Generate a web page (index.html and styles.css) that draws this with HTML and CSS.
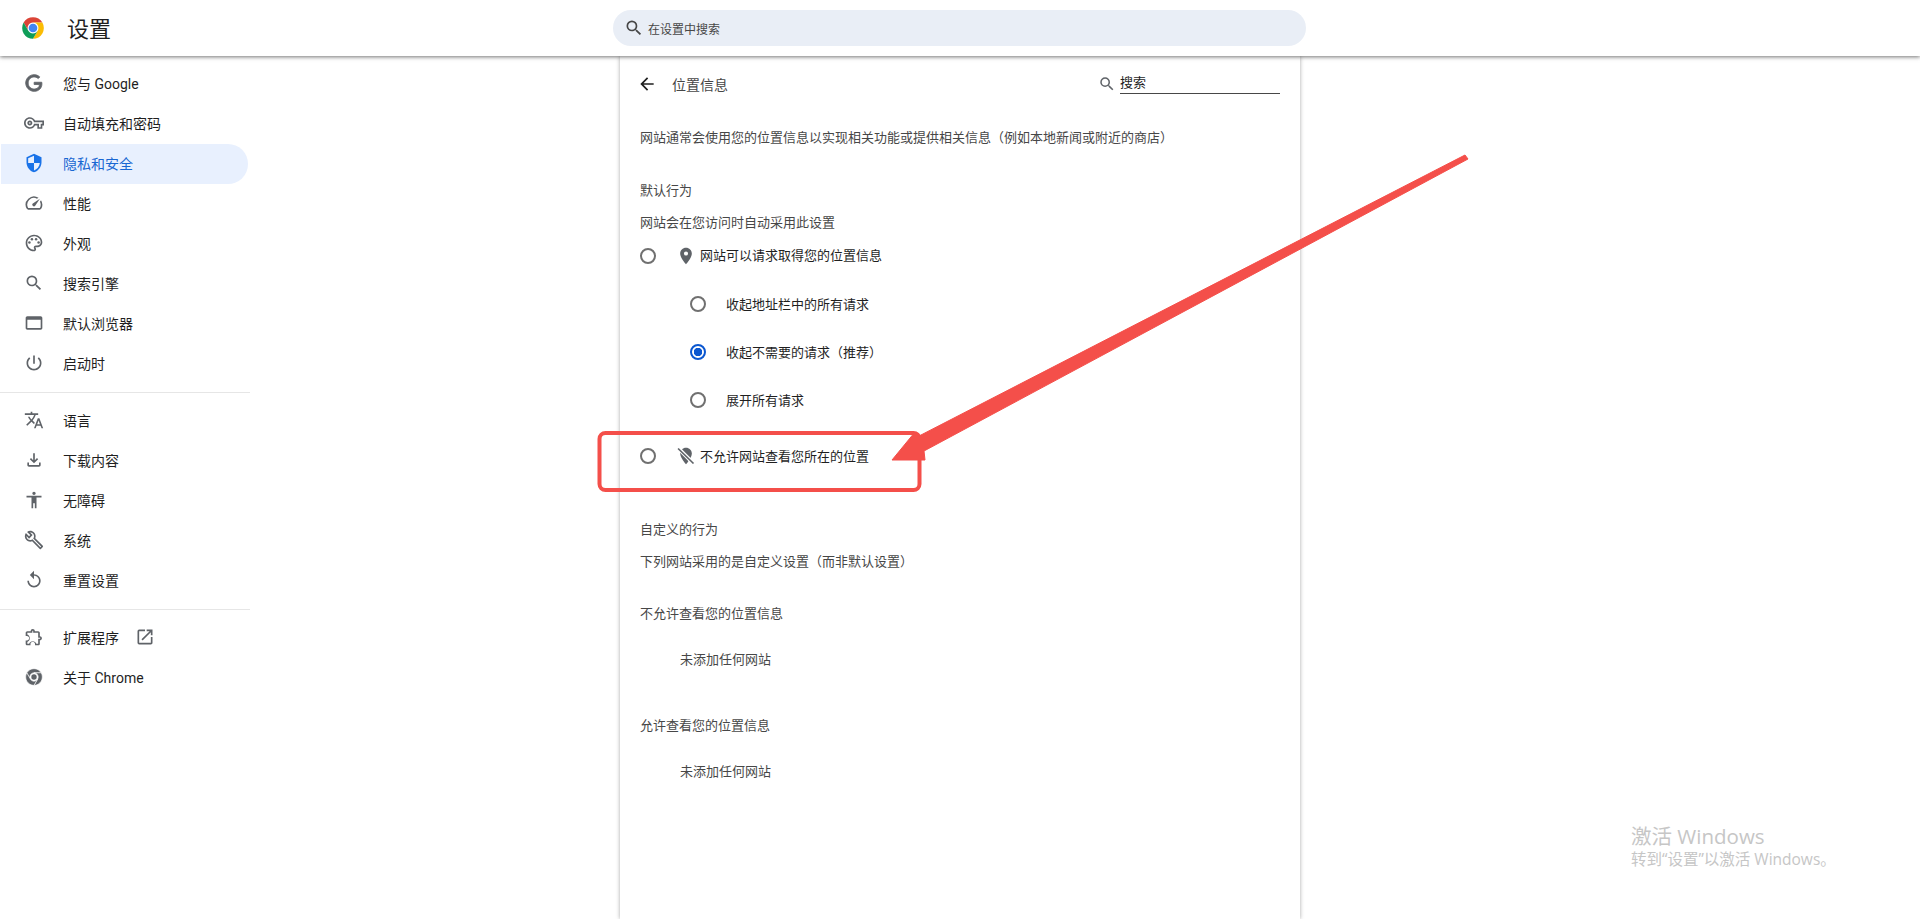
FILE: index.html
```html
<!DOCTYPE html>
<html lang="zh-CN">
<head>
  <meta charset="UTF-8">
  <title>设置 - 位置信息</title>
  <link rel="stylesheet" href="styles.css">
</head>
<body>
  <div class="topbar">
    <div class="brand">
      <svg class="chrome-logo" viewBox="0 0 48 48">
        <circle cx="24" cy="24" r="11" fill="#fff"/>
        <path fill="#db4437" d="M6.68 14A20 20 0 0 1 41.32 14H24A10 10 0 0 0 15.34 29Z"/>
        <path fill="#fbbc04" d="M41.32 14A20 20 0 0 1 24 44L32.66 29A10 10 0 0 0 24 14Z"/>
        <path fill="#0f9d58" d="M24 44A20 20 0 0 1 6.68 14L15.34 29A10 10 0 0 0 32.66 29Z"/>
        <circle cx="24" cy="24" r="8" fill="#4285f4"/>
      </svg>
      <span class="brand-title">设置</span>
    </div>
    <div class="top-search">
      <svg class="ico-search" viewBox="0 0 24 24"><path d="M15.5 14h-.79l-.28-.27A6.471 6.471 0 0 0 16 9.5 6.5 6.5 0 1 0 9.5 16c1.61 0 3.09-.59 4.23-1.57l.27.28v.79l5 4.99L20.49 19l-4.99-5zm-6 0C7.01 14 5 11.99 5 9.5S7.01 5 9.5 5 14 7.01 14 9.5 11.99 14 9.5 14z"/></svg>
      <span>在设置中搜索</span>
    </div>
  </div>

  <div class="main">
    <nav class="sidebar">
      <a class="nav-item">
        <svg class="ico-g" viewBox="0 0 24 24"><path d="M21.35 11.1h-9.17v2.73h6.51c-.33 3.81-3.5 5.44-6.5 5.44C8.36 19.27 5 16.25 5 12c0-4.1 3.2-7.27 7.2-7.27 3.09 0 4.9 1.97 4.9 1.97L19 4.72S16.56 2 12.1 2C6.42 2 2.03 6.8 2.03 12c0 5.05 4.13 10 10.22 10 5.35 0 9.25-3.67 9.25-9.09 0-1.15-.15-1.81-.15-1.81z"/></svg>
        您与 Google
      </a>
      <a class="nav-item">
        <svg viewBox="0 0 24 24"><path d="M22 19h-6v-4h-2.68c-1.14 2.42-3.6 4-6.32 4-3.86 0-7-3.14-7-7s3.14-7 7-7c2.72 0 5.17 1.58 6.32 4H24v6h-2v4zm-4-2h2v-4h2v-2H11.94l-.23-.67C11.01 8.34 9.11 7 7 7c-2.76 0-5 2.24-5 5s2.24 5 5 5c2.11 0 4.01-1.34 4.71-3.33l.23-.67H18v4zM7 15c-1.65 0-3-1.35-3-3s1.35-3 3-3 3 1.35 3 3-1.35 3-3 3zm0-4c-.55 0-1 .45-1 1s.45 1 1 1 1-.45 1-1-.45-1-1-1z"/></svg>
        自动填充和密码
      </a>
      <a class="nav-item active">
        <svg viewBox="0 0 24 24"><path fill-rule="evenodd" d="M12 1L3 5v6c0 5.55 3.84 10.74 9 12 5.16-1.26 9-6.45 9-12V5l-9-4zm0 10.99h7c-.53 4.12-3.28 7.79-7 8.94V12H5V6.3l7-3.11v8.8z"/></svg>
        隐私和安全
      </a>
      <a class="nav-item">
        <svg viewBox="0 0 24 24"><path d="M20.38 8.57l-1.23 1.85a8 8 0 0 1-.22 7.58H5.07A8 8 0 0 1 15.58 6.85l1.85-1.23A10 10 0 0 0 3.35 19a2 2 0 0 0 1.72 1h13.85a2 2 0 0 0 1.74-1 10 10 0 0 0-.27-10.44zm-9.79 6.84a2 2 0 0 0 2.83 0l5.66-8.49-8.49 5.66a2 2 0 0 0 0 2.83z"/></svg>
        性能
      </a>
      <a class="nav-item">
        <svg viewBox="0 0 24 24"><path d="M12 22C6.49 22 2 17.51 2 12S6.49 2 12 2s10 4.04 10 9c0 3.31-2.69 6-6 6h-1.77c-.28 0-.5.22-.5.5 0 .12.05.23.13.33.41.47.64 1.06.64 1.67 0 1.38-1.12 2.5-2.5 2.5zm0-18c-4.41 0-8 3.59-8 8s3.59 8 8 8c.28 0 .5-.22.5-.5a.54.54 0 0 0-.14-.35c-.41-.46-.63-1.05-.63-1.65 0-1.38 1.12-2.5 2.5-2.5H16c2.21 0 4-1.79 4-4 0-3.86-3.59-7-8-7z"/><circle cx="6.5" cy="11.5" r="1.5"/><circle cx="9.5" cy="7.5" r="1.5"/><circle cx="14.5" cy="7.5" r="1.5"/><circle cx="17.5" cy="11.5" r="1.5"/></svg>
        外观
      </a>
      <a class="nav-item">
        <svg viewBox="0 0 24 24"><path d="M15.5 14h-.79l-.28-.27A6.471 6.471 0 0 0 16 9.5 6.5 6.5 0 1 0 9.5 16c1.61 0 3.09-.59 4.23-1.57l.27.28v.79l5 4.99L20.49 19l-4.99-5zm-6 0C7.01 14 5 11.99 5 9.5S7.01 5 9.5 5 14 7.01 14 9.5 11.99 14 9.5 14z"/></svg>
        搜索引擎
      </a>
      <a class="nav-item">
        <svg viewBox="0 0 24 24"><path d="M20 4H4c-1.11 0-2 .9-2 2v12c0 1.1.89 2 2 2h16c1.1 0 2-.9 2-2V6c0-1.1-.9-2-2-2zm0 14H4V8h16v10z"/></svg>
        默认浏览器
      </a>
      <a class="nav-item">
        <svg viewBox="0 0 24 24"><path d="M13 3h-2v10h2V3zm4.83 2.17l-1.42 1.42C17.99 7.86 19 9.81 19 12c0 3.87-3.13 7-7 7s-7-3.13-7-7c0-2.19 1.01-4.14 2.58-5.42L6.17 5.17C4.23 6.82 3 9.26 3 12c0 4.97 4.03 9 9 9s9-4.03 9-9c0-2.74-1.23-5.18-3.17-6.83z"/></svg>
        启动时
      </a>
      <div class="nav-sep"></div>
      <a class="nav-item">
        <svg viewBox="0 0 24 24"><path d="M12.87 15.07l-2.54-2.51.03-.03c1.74-1.94 2.98-4.17 3.71-6.53H17V4h-7V2H8v2H1v1.99h11.17C11.5 7.92 10.44 9.75 9 11.35 8.07 10.32 7.3 9.19 6.69 8h-2c.73 1.63 1.73 3.17 2.98 4.56l-5.09 5.02L4 19l5-5 3.11 3.11.76-2.04zM18.5 10h-2L12 22h2l1.12-3h4.75L21 22h2l-4.5-12zm-2.62 7l1.62-4.33L19.12 17h-3.24z"/></svg>
        语言
      </a>
      <a class="nav-item">
        <svg viewBox="0 0 24 24"><path d="M18 15v3H6v-3H4v3c0 1.1.9 2 2 2h12c1.1 0 2-.9 2-2v-3h-2zm-1-4l-1.41-1.41L13 12.17V4h-2v8.17L8.41 9.59 7 11l5 5 5-5z"/></svg>
        下载内容
      </a>
      <a class="nav-item">
        <svg viewBox="0 0 24 24"><path d="M12 2c1.1 0 2 .9 2 2s-.9 2-2 2-2-.9-2-2 .9-2 2-2zm9 7h-6v13h-2v-6h-2v6H9V9H3V7h18v2z"/></svg>
        无障碍
      </a>
      <a class="nav-item">
        <svg viewBox="0 0 24 24"><path d="M22.61 18.99l-9.08-9.08c.93-2.34.45-5.1-1.44-7C9.79.61 6.21.4 3.66 2.25L7.5 6.1 6.08 7.51 2.25 3.69C.4 6.23.61 9.82 2.91 12.11c1.86 1.86 4.57 2.35 6.89 1.48l9.11 9.11c.39.39 1.02.39 1.41 0l2.3-2.3c.4-.38.4-1.01-.01-1.41zm-3 1.6l-9.46-9.46c-.61.45-1.29.72-2 .82-1.36.2-2.79-.21-3.83-1.25C3.37 9.76 2.93 8.5 3 7.26l3.09 3.09 4.24-4.24-3.09-3.09c1.24-.07 2.49.37 3.44 1.31 1.08 1.08 1.49 2.57 1.24 3.96-.12.71-.42 1.37-.88 1.96l9.45 9.45-.88.89z"/></svg>
        系统
      </a>
      <a class="nav-item">
        <svg viewBox="0 0 24 24"><path d="M12 5V1L7 6l5 5V7c3.31 0 6 2.69 6 6s-2.69 6-6 6-6-2.69-6-6H4c0 4.42 3.58 8 8 8s8-3.58 8-8-3.58-8-8-8z"/></svg>
        重置设置
      </a>
      <div class="nav-sep"></div>
      <a class="nav-item">
        <svg viewBox="0 0 24 24"><path d="M10.5 4.5c.28 0 .5.22.5.5v2h6v6h2c.28 0 .5.22.5.5s-.22.5-.5.5h-2v6h-2.12c-.68-1.75-2.39-3-4.38-3s-3.7 1.25-4.38 3H4v-2.12c1.75-.68 3-2.39 3-4.38 0-1.99-1.24-3.7-2.99-4.38L4 7h6V5c0-.28.22-.5.5-.5zm0-2C9.12 2.5 8 3.62 8 5H4c-1.1 0-1.99.9-1.99 2v3.8H3.5c1.49 0 2.7 1.21 2.7 2.7s-1.21 2.7-2.7 2.7H2V20c0 1.1.9 2 2 2h3.8v-1.5c0-1.49 1.21-2.7 2.7-2.7s2.7 1.21 2.7 2.7V22H17c1.1 0 2-.9 2-2v-4c1.38 0 2.5-1.12 2.5-2.5S20.38 11 19 11V7c0-1.1-.9-2-2-2h-4c0-1.38-1.12-2.5-2.5-2.5z"/></svg>
        扩展程序
        <svg class="ico-open" viewBox="0 0 24 24"><path d="M19 19H5V5h7V3H5a2 2 0 0 0-2 2v14a2 2 0 0 0 2 2h14c1.1 0 2-.9 2-2v-7h-2v7zM14 3v2h3.59l-9.83 9.83 1.41 1.41L19 6.41V10h2V3h-7z"/></svg>
      </a>
      <a class="nav-item">
        <svg class="ico-chrome" viewBox="0 0 48 48"><path d="M6.68 14A20 20 0 0 1 41.32 14H24A10 10 0 0 0 15.34 29Z"/><path d="M41.32 14A20 20 0 0 1 24 44L32.66 29A10 10 0 0 0 24 14Z"/><path d="M24 44A20 20 0 0 1 6.68 14L15.34 29A10 10 0 0 0 32.66 29Z"/><circle cx="24" cy="24" r="6.5"/></svg>
        关于 Chrome
      </a>
    </nav>

    <div class="card">
      <div class="sub-head">
        <svg class="ico-back" viewBox="0 0 24 24"><path d="M20 11H7.83l5.59-5.59L12 4l-8 8 8 8 1.41-1.41L7.83 13H20v-2z"/></svg>
        <span class="sub-title">位置信息</span>
        <div class="sub-search">
          <svg viewBox="0 0 24 24"><path d="M15.5 14h-.79l-.28-.27A6.471 6.471 0 0 0 16 9.5 6.5 6.5 0 1 0 9.5 16c1.61 0 3.09-.59 4.23-1.57l.27.28v.79l5 4.99L20.49 19l-4.99-5zm-6 0C7.01 14 5 11.99 5 9.5S7.01 5 9.5 5 14 7.01 14 9.5 11.99 14 9.5 14z"/></svg>
          <span class="sub-input">搜索</span>
        </div>
      </div>

      <p class="line intro">网站通常会使用您的位置信息以实现相关功能或提供相关信息（例如本地新闻或附近的商店）</p>
      <p class="line default-head">默认行为</p>
      <p class="line default-sub">网站会在您访问时自动采用此设置</p>

      <div class="radio-row">
        <span class="radio"></span>
        <svg class="ico-loc" viewBox="0 0 24 24"><path d="M12 2C8.13 2 5 5.13 5 9c0 5.25 7 13 7 13s7-7.75 7-13c0-3.87-3.13-7-7-7zm0 9.5a2.5 2.5 0 0 1 0-5 2.5 2.5 0 0 1 0 5z"/></svg>
        <span class="radio-label up">网站可以请求取得您的位置信息</span>
      </div>
      <div class="radio-row sub">
        <span class="radio"></span>
        <span class="radio-label">收起地址栏中的所有请求</span>
      </div>
      <div class="radio-row sub">
        <span class="radio on"></span>
        <span class="radio-label">收起不需要的请求（推荐）</span>
      </div>
      <div class="radio-row sub">
        <span class="radio"></span>
        <span class="radio-label">展开所有请求</span>
      </div>
      <div class="radio-row deny">
        <span class="radio"></span>
        <svg class="ico-loc" viewBox="0 0 24 24">
          <path d="M12 2C8.13 2 5 5.13 5 9c0 5.25 7 13 7 13s7-7.75 7-13c0-3.87-3.13-7-7-7z"/>
          <line x1="2" y1="2" x2="22" y2="22" stroke="#fff" stroke-width="4.5"/>
          <line x1="2.5" y1="3" x2="21" y2="21" stroke="#5f6368" stroke-width="2"/>
        </svg>
        <span class="radio-label">不允许网站查看您所在的位置</span>
      </div>

      <p class="line custom-head">自定义的行为</p>
      <p class="line custom-sub">下列网站采用的是自定义设置（而非默认设置）</p>
      <p class="line list-head">不允许查看您的位置信息</p>
      <p class="line empty">未添加任何网站</p>
      <p class="line list-head second">允许查看您的位置信息</p>
      <p class="line empty">未添加任何网站</p>
    </div>
  </div>

  <!-- red annotation drawn over the screenshot -->
  <svg class="markup" viewBox="0 0 1920 919">
    <rect x="599.5" y="433" width="320" height="57" rx="6" fill="none" stroke="#f44f4a" stroke-width="4"/>
    <polygon fill="#f44f4a" stroke="#f44f4a" stroke-width="1" stroke-linejoin="round"
      points="1465,155 1468,159 924,451 925,460 892,460 915,432 919,436"/>
  </svg>

  <div class="watermark">
    <div class="wm-title">激活 Windows</div>
    <div class="wm-sub">转到“设置”以激活 Windows。</div>
  </div>
</body>
</html>
```

FILE: styles.css
```css
* {
  box-sizing: border-box;
}

html, body {
  height: 100%;
}

body {
  margin: 0;
  overflow: hidden;
  background: #fff;
  color: #1f1f1f;
  font-family: Roboto, "Noto Sans CJK SC", sans-serif;
  font-size: 13px;
}

svg {
  fill: #5f6368;
}

/* top bar */
.topbar {
  position: relative;
  z-index: 2;
  display: grid;
  grid-template-columns: 613px 693px 1fr;
  align-items: center;
  height: 56px;
  background: #fff;
  box-shadow: 0 1px 4px rgba(0,0,0,0.55);
}

.brand {
  display: flex;
  align-items: center;
  padding-left: 20px;
}

.chrome-logo {
  width: 26px;
  height: 26px;
}

.brand-title {
  margin-left: 21px;
  padding-top: 3px;
  font-size: 22px;
  line-height: 28px;
}

.top-search {
  display: flex;
  align-items: center;
  height: 36px;
  padding-left: 11px;
  border-radius: 18px;
  background: #e9eef6;
  font-size: 12px;
  color: #474747;
}

.ico-search {
  width: 20px;
  height: 20px;
  margin-right: 4px;
  fill: #474747;
}

/* sidebar */
.main {
  display: flex;
  flex: 1;
  height: 863px;
}

.sidebar {
  width: 250px;
  flex-shrink: 0;
  padding-top: 8px;
}

.nav-item {
  display: flex;
  align-items: center;
  height: 40px;
  width: 247px;
  margin-left: 1px;
  padding: 0 0 2px 23px;
  font-size: 14px;
  border-radius: 0 20px 20px 0;
}

.nav-item svg {
  width: 20px;
  height: 20px;
  margin-right: 19px;
}

.nav-item svg.ico-open {
  margin: 0 0 0 16px;
}

.nav-item svg.ico-g path {
  stroke: #5f6368;
  stroke-width: 1;
}

.ico-chrome path {
  stroke: #fff;
  stroke-width: 1.5;
}

.nav-item.active {
  background: #e8f0fe;
  color: #1967d2;
}

.nav-item.active svg {
  fill: #1a73e8;
}

.nav-sep {
  height: 1px;
  margin: 8px 0;
  background: #e6e6e6;
}

/* card */
.card {
  width: 680px;
  margin-left: 370px;
  padding: 0 20px;
  background: #fff;
  box-shadow: 0 0 4px rgba(0,0,0,0.35);
  color: #474747;
}

.sub-head {
  display: flex;
  align-items: center;
  height: 56px;
}

.ico-back {
  width: 20px;
  height: 20px;
  margin-left: -3px;
  fill: #1f1f1f;
}

.sub-title {
  margin-left: 15px;
  font-size: 14px;
  padding-bottom: 1px;
}

.sub-search {
  display: flex;
  align-items: flex-end;
  margin-left: auto;
}

.sub-search svg {
  width: 18px;
  height: 18px;
  margin: 0 4px 1px -1px;
}

.sub-input {
  width: 160px;
  padding-bottom: 1px;
  border-bottom: 1px solid #474747;
  font-size: 13px;
  line-height: 18px;
  color: #1f1f1f;
}

.line {
  margin: 0;
  font-size: 13px;
  line-height: 18px;
}

.intro { margin-top: 17px; }
.default-head { margin-top: 35px; }
.default-sub { margin-top: 14px; }
.custom-head { margin-top: 41px; }
.custom-sub { margin-top: 14px; }
.list-head { margin-top: 34px; }
.list-head.second { margin-top: 48px; }

.empty {
  margin-top: 28px;
  padding-left: 40px;
}

.radio-row {
  display: flex;
  align-items: center;
  height: 48px;
  color: #1f1f1f;
}

.radio-row.sub {
  padding-left: 50px;
}

.radio-row.deny {
  margin-top: 8px;
}

.radio-label {
  padding-bottom: 2px;
}

.radio-label.up {
  padding-bottom: 4px;
}

.radio {
  width: 16px;
  height: 16px;
  flex-shrink: 0;
  margin-right: 20px;
  border: 2px solid #707070;
  border-radius: 50%;
}

.radio.on {
  border-color: #0b57d0;
  background: radial-gradient(circle, #0b57d0 0 4px, #fff 4.5px);
}

.ico-loc {
  width: 20px;
  height: 20px;
  margin-right: 4px;
}

/* overlays */
.markup {
  position: absolute;
  top: 0;
  left: 0;
  z-index: 3;
  width: 1920px;
  height: 919px;
  pointer-events: none;
}

.watermark {
  position: absolute;
  top: 822px;
  left: 1631px;
  z-index: 4;
  color: #c6c6c6;
  font-family: "Open Sans", "Noto Sans CJK SC", sans-serif;
}

.wm-title {
  font-size: 20.5px;
  line-height: 28px;
}

.wm-sub {
  font-size: 15.5px;
  line-height: 18px;
}
```
